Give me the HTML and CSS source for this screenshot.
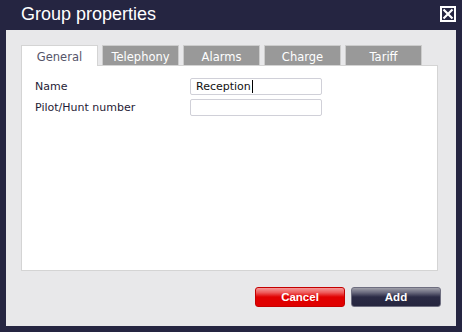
FILE: index.html
```html
<!DOCTYPE html>
<html lang="en">
<head>
    <meta charset="UTF-8">
    <title>Group properties</title>
    <link rel="stylesheet" href="styles.css">
</head>
<body>
    <div class="dialog">
        <div class="header">
            <span class="title">Group properties</span>
            <span class="close">
                <svg width="12" height="12" viewBox="0 0 12 12"><path d="M1.5 1.5L10.5 10.5M10.5 1.5L1.5 10.5" stroke="#fff" stroke-width="2.2"/></svg>
            </span>
        </div>
        <div class="panel">
            <div class="tabs">
                <div class="tab active">General</div>
                <div class="tab">Telephony</div>
                <div class="tab">Alarms</div>
                <div class="tab">Charge</div>
                <div class="tab">Tariff</div>
            </div>
            <div class="content">
                <div class="row">
                    <label>Name</label>
                    <div class="field">Reception<span class="caret"></span></div>
                </div>
                <div class="row">
                    <label>Pilot/Hunt number</label>
                    <div class="field"></div>
                </div>
            </div>
            <div class="buttons">
                <button class="btn cancel">Cancel</button>
                <button class="btn add">Add</button>
            </div>
        </div>
    </div>
</body>
</html>
```

FILE: styles.css
```css
*{
    box-sizing: border-box;
}
body{
    margin: 0;
    padding: 0;
    background-color: #252541;
    font-family: 'DejaVu Sans', Verdana, sans-serif;
}
.dialog{
    width: 462px;
    height: 332px;
    display: flex;
    flex-direction: column;
}
.header{
    height: 30px;
    display: flex;
    align-items: center;
    justify-content: space-between;
    padding: 0 6px 0 21px;
}
.title{
    color: #fff;
    font-family: 'Liberation Sans', Arial, sans-serif;
    font-size: 18px;
    margin-top: -1px;
}
.close{
    width: 16px;
    height: 16px;
    border: 2px solid #fff;
    display: flex;
    align-items: center;
    justify-content: center;
    margin-top: -2px;
}
.close svg{
    display: block;
}
.panel{
    flex: 1;
    margin: 0 6px 6px 6px;
    background-color: #e8e8ea;
    padding: 15px 18px 0 15px;
    display: flex;
    flex-direction: column;
}
.tabs{
    display: flex;
    gap: 4px;
    height: 20px;
}
.tab{
    width: 77px;
    height: 20px;
    background-color: #999999;
    border: 1px solid #cccccc;
    border-bottom: none;
    color: #fff;
    font-size: 11.5px;
    text-align: center;
    line-height: 22px;
}
.tab.active{
    background-color: #fff;
    border-color: #d4d4d4;
    color: #55556a;
    height: 21px;
    position: relative;
    z-index: 1;
}
.content{
    height: 206px;
    background-color: #fff;
    border: 1px solid #d4d4d4;
    padding: 12px 13px;
    display: flex;
    flex-direction: column;
    gap: 5px;
}
.row{
    display: flex;
    align-items: center;
    height: 16px;
}
.row label{
    width: 155px;
    font-size: 11px;
    color: #1f1b36;
    padding-top: 1px;
}
.field{
    width: 132px;
    height: 17px;
    border: 1px solid #d0d0d8;
    border-radius: 2px;
    font-size: 11px;
    color: #111;
    padding: 0 5px;
    line-height: 15px;
    display: flex;
    align-items: center;
}
.caret{
    display: inline-block;
    width: 1px;
    height: 13px;
    background-color: #000;
    margin-left: 1px;
}
.buttons{
    display: flex;
    justify-content: flex-end;
    gap: 6px;
    margin-top: 16px;
    margin-right: -3px;
}
.btn{
    width: 90px;
    height: 20px;
    border-radius: 3px;
    color: #fff;
    font-family: 'Liberation Sans', Arial, sans-serif;
    font-weight: bold;
    font-size: 11.5px;
    padding: 0;
    cursor: pointer;
}
.cancel{
    border: 1px solid #c40000;
    background: linear-gradient(#f49a9a 0%, #ee5b5b 25%, #e00000 50%, #e00000 100%);
}
.add{
    border: 1px solid #6e6e80;
    background: linear-gradient(#a0a0aa 0%, #6a6a7e 25%, #2a2a45 50%, #26263f 100%);
}
```
